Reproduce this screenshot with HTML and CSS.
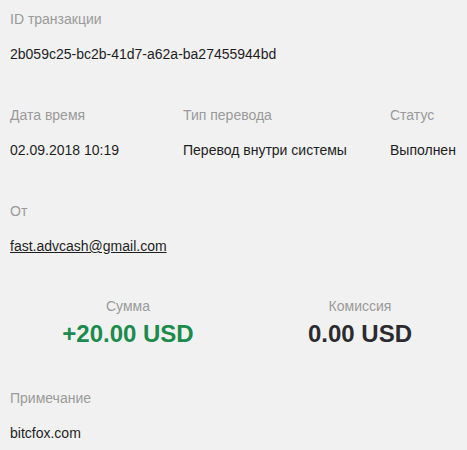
FILE: index.html
```html
<!DOCTYPE html>
<html lang="ru">
<head>
<meta charset="utf-8">
<link rel="stylesheet" href="styles.css">
</head>
<body>
<div class="page">
  <section class="block">
    <div class="label">ID транзакции</div>
    <div class="value">2b059c25-bc2b-41d7-a62a-ba27455944bd</div>
  </section>
  <section class="block cols">
    <div class="col">
      <div class="label">Дата время</div>
      <div class="value">02.09.2018 10:19</div>
    </div>
    <div class="col">
      <div class="label">Тип перевода</div>
      <div class="value">Перевод внутри системы</div>
    </div>
    <div class="col">
      <div class="label">Статус</div>
      <div class="value">Выполнен</div>
    </div>
  </section>
  <section class="block">
    <div class="label">От</div>
    <div class="value"><a class="link" href="#">fast.advcash@gmail.com</a></div>
  </section>
  <section class="block sums">
    <div class="sum">
      <div class="label">Сумма</div>
      <div class="amount plus">+20.00 USD</div>
    </div>
    <div class="sum">
      <div class="label">Комиссия</div>
      <div class="amount">0.00 USD</div>
    </div>
  </section>
  <section class="block note">
    <div class="label">Примечание</div>
    <div class="value">bitcfox.com</div>
  </section>
</div>
</body>
</html>
```
FILE: styles.css
```css
html, body {
  margin: 0;
  padding: 0;
  background: #f1f1f1;
}
body {
  font-family: "Liberation Sans", Arial, sans-serif;
  font-size: 14px;
  color: #222;
  overflow: hidden;
}
.page {
  padding: 9px 10px 0 10px;
  display: flex;
  flex-direction: column;
  gap: 41px;
}
.label {
  color: #9a9a9a;
  line-height: 20px;
}
.value {
  line-height: 20px;
  margin-top: 15px;
  color: #1e1e1e;
}
.link {
  color: #1e1e1e;
  text-decoration: underline;
}
.cols {
  display: grid;
  grid-template-columns: 173px 207px auto;
}
.sums {
  display: grid;
  grid-template-columns: 232px 232px;
  margin-left: 2px;
  margin-top: -1px;
  text-align: center;
}
.amount {
  font-size: 24px;
  font-weight: bold;
  line-height: 30px;
  margin-top: 3px;
  color: #2b2b2f;
}
.amount.plus {
  color: #1b8b4b;
}
.note {
  margin-top: -2px;
}
```
